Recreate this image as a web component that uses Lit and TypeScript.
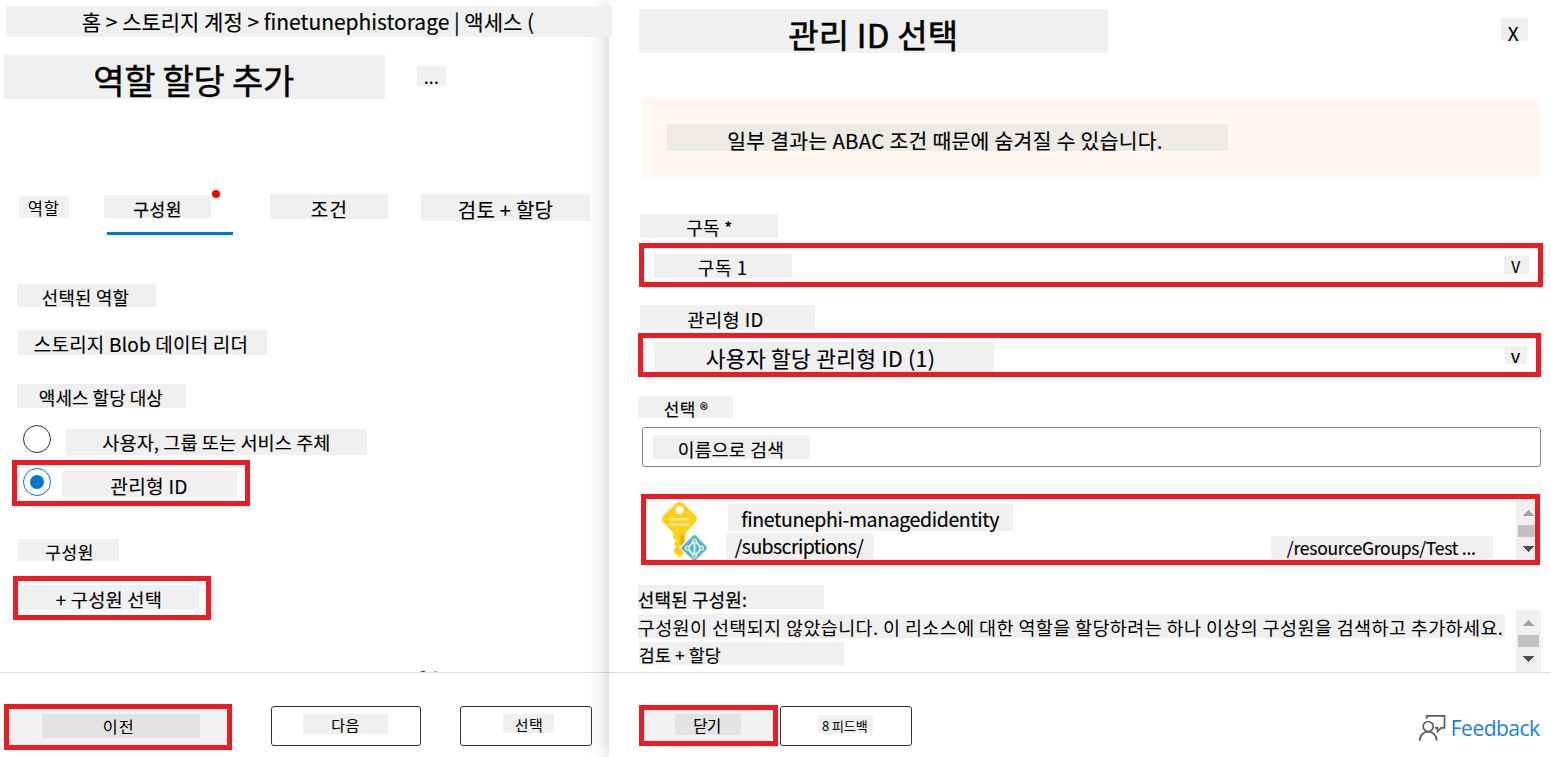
import { LitElement, html, css, svg } from "lit";
import { customElement, property } from "lit/decorators.js";

/** A line of text on a tinted plate; tracking is adjusted so the line fills `measure` pixels. */
@customElement("text-plate")
class TextPlate extends LitElement {
  @property() text = "";
  @property({ type: Number }) measure = 0;

  static styles = css`
    :host {
      display: flex;
      align-items: flex-start;
      flex: none;
      box-sizing: border-box;
      width: var(--w);
      height: var(--h);
      margin: var(--mt, 0) 0 0 var(--ml, 0);
      padding-left: var(--tx, 0);
      background: var(--plate, #f0f0f0);
      color: var(--ink, #000);
      font-family: var(--face, "Noto Sans CJK KR", "Noto Sans", sans-serif);
      font-size: var(--fs);
      font-weight: 400;
      -webkit-text-stroke: var(--stroke, 0.15px) currentColor;
    }
    span {
      display: block;
      white-space: pre;
      line-height: 1;
      margin-top: calc(var(--cy) - 0.556em);
      margin-left: -0.01em;
    }
  `;

  render() {
    return html`<span>${this.text}</span>`;
  }

  updated() {
    const line = this.renderRoot.querySelector("span") as HTMLElement;
    if (!this.measure || !line) return;
    line.style.letterSpacing = "0";
    const em = parseFloat(getComputedStyle(line).fontSize);
    const natural = line.getBoundingClientRect().width - em * 0.06;
    const gaps = Math.max(1, this.text.length - 1);
    line.style.letterSpacing = `${(this.measure - natural) / gaps}px`;
  }
}

@customElement("scroll-strip")
class ScrollStrip extends LitElement {
  static styles = css`
    :host { display: block; flex: none; background: #f0f0f0; overflow: hidden; }
    svg { display: block; }
  `;
  render() {
    return html`<svg width="25" height="62" viewBox="0 0 25 62" shape-rendering="crispEdges">
      <path d="M7 16h11l-5.500-6z" fill="#a3a3a3"/>
      <path d="M2 25h21v12H2z" fill="#c1c1c1"/>
      <path d="M7 46h11l-5.500 6z" fill="#505050"/>
    </svg>`;
  }
}

const keyIcon = svg`
  <svg width="46" height="59" viewBox="0 0 46 59">
    <path d="M11.500 31h12v18l-5.500 8-6-6v-3l2.500-2-2.500-2.500v-2l2.500-2-3.500-3v-2.500l1-1z" fill="#fcd116"/>
    <path d="M18.500 34.500h3.500v11l-3.500 4z" fill="#f9a908"/>
    <path d="M13.500 2.800q4-3.600 8 0L33 14q4 4 0 8L22.500 33q-1 1-3 1h-4q-2 0-3-1L2 22q-4-4 0-8z" fill="#fcd116"/>
    <circle cx="17.500" cy="9" r="3.900" fill="#fff"/>
    <path d="M7.500 17h20v2.600h-20zM7.500 22.200h20v2.600h-20z" fill="#fee88f"/>
    <path d="M32.500 31.300L47 46.500 32.500 62 17 46.500z" fill="#fff"/>
    <path d="M31 34.700q1.500-1.300 3 0l10.500 10.800q1.200 1.400 0 2.800L34 59h-3L20 48.300q-1.200-1.400 0-2.800z" fill="#59b4d9"/>
    <path d="M32.500 39.500v16M32 40l-6.500 7.300 7 8 7-8L33 40" fill="none" stroke="#eef9fd" stroke-width="1.600"/>
    <g fill="#a5ce3a" stroke="#fff" stroke-width=".9">
      <circle cx="32.500" cy="40" r="2"/><circle cx="25.300" cy="47.200" r="2"/>
      <circle cx="39.700" cy="47.200" r="2"/><circle cx="32.500" cy="55.200" r="2"/>
    </g>
  </svg>`;

const feedbackIcon = svg`
  <svg width="28" height="28" viewBox="0 0 28 28" fill="none" stroke="#5c5c5c" stroke-width="1.700">
    <path d="M7.700 5V1.900h17.800v12h-3.200l-3.800 3.500v-3.600h-2.600"/>
    <circle cx="9.200" cy="12.500" r="5"/>
    <path d="M.6 26.800c.3-5.600 4-9.200 8.600-9.200s8.300 3.600 8.600 9.200"/>
  </svg>`;

@customElement("app-root")
class AppRoot extends LitElement {
  static styles = css`
    :host {
      display: grid;
      grid-template-columns: 609px 942px;
      width: 1551px;
      height: 757px;
      overflow: hidden;
      background: #fff;
    }
    .pane { display: flex; flex-direction: column; height: 757px; min-width: 0; }
    .side { background: #fff; box-shadow: 0 0 20px rgba(0, 0, 0, 0.22); }
    .body { display: flex; flex-direction: column; height: 672px; align-items: flex-start; }
    .row { display: flex; align-items: flex-start; flex: none; }
    .foot {
      display: flex;
      align-items: flex-start;
      box-sizing: border-box;
      height: 85px;
      border-top: 1px solid #dcdcdc;
    }
    .mark { box-sizing: border-box; border: 5px solid #ed1c24; display: flex; align-items: flex-start; flex: none; overflow: hidden; }
    .button { box-sizing: border-box; border: 1px solid #323130; border-radius: 3px; display: flex; align-items: flex-start; flex: none; margin-top: 33px; height: 40px; }
    .filled { background: #f3f2f1; --plate: #e3e3e3; }

    .crumb { position: relative; z-index: 1; --plate: #eff1f0; --mt: 6px; --ml: 6px; --w: 606px; --h: 31px; --tx: 76px; --cy: 16.500px; --fs: 21px; }
    .title-row { margin-top: 17px; height: 45px; }
    .title { --mt: 1px; --ml: 4px; --w: 381px; --h: 44px; --tx: 89.500px; --cy: 26.500px; --fs: 34px; --stroke: 0.45px; }
    .more { --mt: 12px; --ml: 32px; --w: 29px; --h: 20px; --tx: 7px; --cy: 11.500px; --fs: 18px; --stroke: 0; }

    .tabs { margin-top: 91px; height: 45px; }
    .t1 { --mt: 6px; --ml: 19px; --w: 50px; --h: 22px; --tx: 9px; --cy: 13.500px; --fs: 16.500px; --stroke: 0; }
    .tab { display: flex; flex-direction: column; width: 129px; height: 45px; margin-left: 35px; }
    .tab-head { display: flex; align-items: flex-start; height: 42px; }
    .dot { width: 8px; height: 8px; border-radius: 50%; background: #f00; margin-left: 1px; }
    .line { height: 3px; margin-left: 3px; background: #0078d4; }
    .t2 { --mt: 5px; --w: 107px; --h: 23px; --tx: 29.500px; --cy: 14px; --fs: 17px; --stroke: 0.25px; }
    .t3 { --mt: 4px; --ml: 37px; --w: 118px; --h: 25px; --tx: 41px; --cy: 15.500px; --fs: 19px; }
    .t4 { --mt: 4px; --ml: 33px; --w: 169px; --h: 27px; --tx: 37px; --cy: 17px; --fs: 20px; }

    .role-label { --mt: 49px; --ml: 17px; --w: 139px; --h: 23px; --tx: 25px; --cy: 14.800px; --fs: 17.800px; }
    .role { --mt: 23px; --ml: 18px; --w: 249px; --h: 25px; --tx: 16px; --cy: 14.500px; --fs: 19px; }
    .assign { --mt: 29px; --ml: 17px; --w: 169px; --h: 24px; --tx: 22px; --cy: 14.500px; --fs: 18px; }
    .radio { box-sizing: border-box; flex: none; width: 28px; height: 28px; border: 1px solid #323130; border-radius: 50%; background: #fff; }
    .opt-a { margin: 17px 0 0 23px; height: 30px; }
    .user { --mt: 4px; --ml: 15px; --w: 301px; --h: 26px; --tx: 36.500px; --cy: 14.500px; --fs: 18.600px; }
    .opt-b { margin: 5px 0 0 12px; width: 238px; height: 46px; }
    .on { border-color: #0078d4; margin: 3px 0 0 6px; display: grid; place-items: center; }
    .on::after { content: ""; width: 14px; height: 14px; border-radius: 50%; background: #0078d4; }
    .managed { --mt: 6px; --ml: 11px; --w: 175px; --h: 26px; --tx: 48.500px; --cy: 16.200px; --fs: 19.200px; }
    .members { --mt: 33px; --ml: 18px; --w: 101px; --h: 22px; --tx: 27.500px; --cy: 13px; --fs: 17px; }
    .pick { margin: 15px 0 0 13px; width: 198px; height: 44px; }
    .pick-text { --mt: 4px; --ml: 2px; --w: 179px; --h: 24px; --tx: 36px; --cy: 15.200px; --fs: 18.700px; }
    .clipped { display: flex; gap: 9px; margin: 51px 0 0 421px; }
    .clipped i { width: 4px; height: 1px; background: #444; }
    .clipped i + i { width: 3px; background: #aaa; }

    .prev { margin: 31px 0 0 4px; width: 228px; height: 46px; }
    .prev-t { --mt: 5px; --ml: 33px; --w: 158px; --h: 24px; --tx: 61px; --cy: 13.500px; --fs: 16.300px; --stroke: 0; }
    .next { margin-left: 39px; width: 150px; }
    .next-t { --mt: 7px; --ml: 31px; --w: 85px; --h: 20px; --tx: 28.500px; --cy: 11.500px; --fs: 15px; }
    .sel { margin-left: 39px; width: 132px; }
    .sel-t { --mt: 7px; --ml: 42px; --w: 51px; --h: 19px; --tx: 12px; --cy: 11px; --fs: 15px; --stroke: 0; }

    .heading { --mt: 9px; --ml: 30px; --w: 469px; --h: 44px; --tx: 149.500px; --cy: 27px; --fs: 33px; --stroke: 0.6px; }
    .close { --mt: 18px; --ml: 393px; --w: 27px; --h: 23px; --tx: 7px; --cy: 15.500px; --fs: 19px; }
    .banner { display: flex; align-items: flex-start; margin: 44px 0 0 33px; width: 898px; height: 81px; border-radius: 3px; background: #fff7f0; flex: none; }
    .notice { --plate: #eeeae4; --mt: 27px; --ml: 25px; --w: 561px; --h: 27px; --tx: 60.500px; --cy: 16.900px; --fs: 20.400px; }
    .sub { --mt: 36px; --ml: 31px; --w: 138px; --h: 24px; --tx: 46.500px; --cy: 14.500px; --fs: 18px; }
    .sub-box { margin: 5px 0 0 30px; width: 904px; height: 44px; }
    .sub-val { --mt: 6px; --ml: 10px; --w: 138px; --h: 24px; --tx: 44px; --cy: 14.500px; --fs: 18px; }
    .v1 { --mt: 7px; --ml: 712px; --w: 25px; --h: 19px; --tx: 7.500px; --cy: 12.500px; --fs: 15.500px; }
    .mi { --mt: 18px; --ml: 31px; --w: 175px; --h: 25px; --tx: 47.500px; --cy: 15.200px; --fs: 18.700px; }
    .mi-box { margin: 3px 0 0 29px; width: 903px; height: 44px; }
    .mi-val { --mt: 4px; --ml: 11px; --w: 340px; --h: 30px; --tx: 52px; --cy: 17px; --fs: 21.500px; }
    .v2 { --mt: 8px; --ml: 511px; --w: 22px; --h: 18px; --tx: 6px; --cy: 10px; --fs: 18px; }
    .pick-label { --mt: 19px; --ml: 29px; --w: 95px; --h: 22px; --tx: 26px; --cy: 13px; --fs: 17px; }
    .search { box-sizing: border-box; display: flex; align-items: flex-start; flex: none; margin: 9px 0 0 33px; width: 899px; height: 40px; border: 1px solid #8a8886; border-radius: 3px; }
    .search-t { --mt: 7px; --ml: 10px; --w: 157px; --h: 24px; --tx: 25px; --cy: 15px; --fs: 18.200px; }
    .list { margin: 27px 0 0 32px; width: 899px; height: 71px; }
    .key { width: 46px; height: 59px; margin: 2px 0 0 16px; flex: none; }
    .stack { display: flex; flex-direction: column; margin-left: 18px; width: 148px; height: 61px; }
    .name { --mt: 5px; --ml: 2px; --w: 285px; --h: 27px; --tx: 13.500px; --cy: 15.800px; --fs: 19.500px; }
    .path { --mt: 2px; --w: 148px; --h: 26px; --tx: 9px; --cy: 14px; --fs: 19.500px; }
    .group { --mt: 37px; --ml: 397px; --w: 222px; --h: 23px; --tx: 16px; --cy: 13px; --fs: 17.500px; }
    .strip-a { margin: 1px 0 0 23px; width: 19px; height: 60px; }
    .picked { margin-top: 20px; height: 87px; }
    .lines { display: flex; flex-direction: column; width: 867px; margin-left: 29px; }
    .l1 { --w: 186px; --h: 24px; --tx: 0px; --cy: 15px; --fs: 18px; --stroke: 0.25px; }
    .l2 { --mt: 5px; --w: 867px; --h: 24px; --tx: 0px; --cy: 14.500px; --fs: 18.500px; --stroke: 0; }
    .l3 { --mt: 4px; --ml: 1px; --w: 205px; --h: 23px; --cy: 14px; --fs: 17.400px; }
    .strip-b { margin: 25px 0 0 11px; width: 25px; height: 62px; }

    .shut { margin: 32px 0 0 30px; width: 139px; height: 41px; }
    .shut-t { --mt: 4px; --ml: 31px; --w: 66px; --h: 21px; --tx: 18.500px; --cy: 13px; --fs: 15.500px; }
    .fb { margin-left: 2px; width: 132px; }
    .fb-t { --mt: 8px; --ml: 37px; --w: 55px; --h: 18px; --tx: 4px; --cy: 10.800px; --fs: 13px; --stroke: 0; }
    .feedback { display: flex; align-items: flex-start; margin: 41px 0 0 507px; }
    .fb-link { --plate: transparent; --ink: #1683d8; --stroke: 0; --face: "Open Sans", "Noto Sans", sans-serif; --ml: 4px; --w: 90px; --h: 26px; --cy: 16px; --fs: 21px; }
  `;

  private plate(cls: string, text: string, measure: number) {
    return html`<text-plate class=${cls} .text=${text} .measure=${measure}></text-plate>`;
  }

  render() {
    const p = this.plate;
    return html`
      <section class="pane">
        <div class="body">
          ${p("crumb", "홈 > 스토리지 계정 > finetunephistorage | 액세스 (", 451)}
          <div class="row title-row">
            ${p("title", "역할 할당 추가", 199)} ${p("more", "...", 14)}
          </div>
          <div class="row tabs">
            ${p("t1", "역할", 30)}
            <div class="tab">
              <div class="tab-head">${p("t2", "구성원", 47)}<div class="dot"></div></div>
              <div class="line"></div>
            </div>
            ${p("t3", "조건", 35)} ${p("t4", "검토 + 할당", 94)}
          </div>
          ${p("role-label", "선택된 역할", 86)}
          ${p("role", "스토리지 Blob 데이터 리더", 213)}
          ${p("assign", "액세스 할당 대상", 123)}
          <div class="row opt-a">
            <div class="radio"></div>
            ${p("user", "사용자, 그룹 또는 서비스 주체", 227)}
          </div>
          <div class="mark opt-b">
            <div class="radio on"></div>
            ${p("managed", "관리형 ID", 76)}
          </div>
          ${p("members", "구성원", 47)}
          <div class="mark pick">${p("pick-text", "+ 구성원 선택", 105)}</div>
          <div class="clipped"><i></i><i></i></div>
        </div>
        <div class="foot">
          <div class="mark filled prev">${p("prev-t", "이전", 30)}</div>
          <div class="button next">${p("next-t", "다음", 27)}</div>
          <div class="button sel">${p("sel-t", "선택", 27)}</div>
        </div>
      </section>
      <section class="pane side">
        <div class="body">
          <div class="row">
            ${p("heading", "관리 ID 선택", 168)} ${p("close", "X", 0)}
          </div>
          <div class="banner">${p("notice", "일부 결과는 ABAC 조건 때문에 숨겨질 수 있습니다.", 434)}</div>
          ${p("sub", "구독 *", 45)}
          <div class="mark sub-box">${p("sub-val", "구독 1", 48)} ${p("v1", "V", 0)}</div>
          ${p("mi", "관리형 ID", 75)}
          <div class="mark mi-box">${p("mi-val", "사용자 할당 관리형 ID (1)", 228)} ${p("v2", "v", 0)}</div>
          ${p("pick-label", "선택 ®", 43)}
          <div class="search">${p("search-t", "이름으로 검색", 105)}</div>
          <div class="mark list">
            <div class="key">${keyIcon}</div>
            <div class="stack">
              ${p("name", "finetunephi-managedidentity", 257)} ${p("path", "/subscriptions/", 128)}
            </div>
            ${p("group", "/resourceGroups/Test ...", 188)}
            <scroll-strip class="strip-a"></scroll-strip>
          </div>
          <div class="row picked">
            <div class="lines">
              ${p("l1", "선택된 구성원:", 108)}
              ${p("l2", "구성원이 선택되지 않았습니다. 이 리소스에 대한 역할을 할당하려는 하나 이상의 구성원을 검색하고 추가하세요.", 864)}
              ${p("l3", "검토 + 할당", 81)}
            </div>
            <scroll-strip class="strip-b"></scroll-strip>
          </div>
        </div>
        <div class="foot">
          <div class="mark filled shut">${p("shut-t", "닫기", 27)}</div>
          <div class="button fb">${p("fb-t", "8 피드백", 45)}</div>
          <div class="feedback">${feedbackIcon}${p("fb-link", "Feedback", 88)}</div>
        </div>
      </section>
    `;
  }
}
